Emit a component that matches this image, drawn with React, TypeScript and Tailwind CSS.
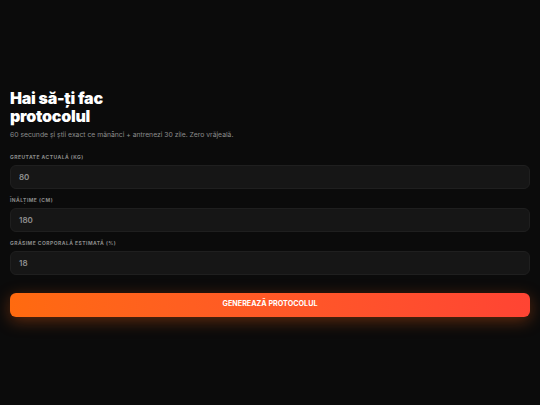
const fields = [
  { label: "Greutate actuală (kg)", value: "80" },
  { label: "Înălțime (cm)", value: "180" },
  { label: "Grăsime corporală estimată (%)", value: "18" },
];

export default function App() {
  return (
    <div className="min-h-screen w-full bg-[#0b0b0b] flex flex-col justify-center px-[10px] font-['Inter','Noto_Sans',sans-serif]">
      {/* Header */}
      <h1 className="text-[16px] leading-[18px] font-black text-white tracking-[-0.015em]">
        Hai să-ți fac
        <br />
        protocolul
      </h1>
      <p className="mt-[5px] text-[6.8px] leading-[9px] text-[#8c8c8c]">
        60 secunde și știi exact ce mănânci + antrenezi 30 zile. Zero vrăjeală.
      </p>

      {/* Fields */}
      <div className="mt-[15px] flex flex-col gap-[8px]">
        {fields.map((f) => (
          <div key={f.label} className="flex flex-col">
            <label className="text-[5px] leading-[7px] font-bold uppercase tracking-[0.09em] text-[#8a8a8a]">
              {f.label}
            </label>
            <div className="mt-[4px] h-[24px] flex items-center px-[8px] rounded-[6px] bg-[#161616] border border-[#1f1f1f]">
              <span className="text-[8px] font-semibold text-[#8f8f8f]">{f.value}</span>
            </div>
          </div>
        ))}
      </div>

      {/* Submit */}
      <button className="mt-[18px] h-[24px] w-full rounded-[6px] bg-gradient-to-r from-[#ff6a0f] to-[#ff4433] text-white text-[7.2px] font-bold uppercase shadow-[0_4px_16px_rgba(255,100,20,0.35)]">
        Generează protocolul
      </button>
    </div>
  );
}
